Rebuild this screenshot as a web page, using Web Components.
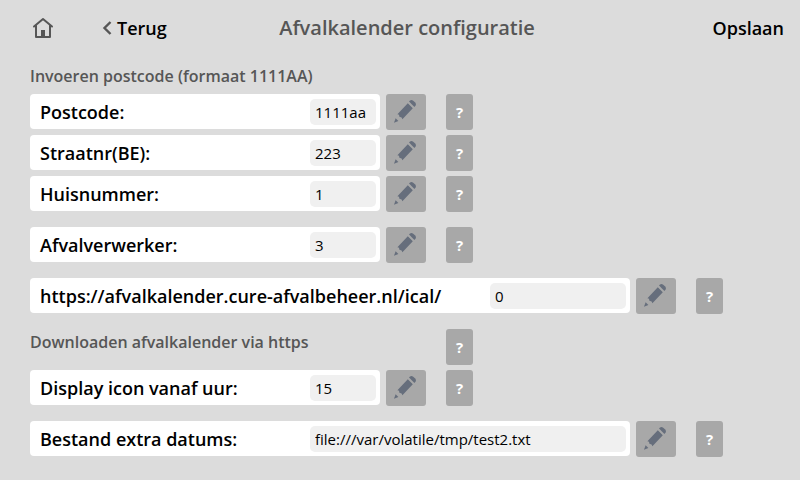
<!DOCTYPE html>
<html lang="nl">
<head>
<meta charset="utf-8">
<meta name="viewport" content="width=device-width, initial-scale=1">
<title>Afvalkalender configuratie</title>
<style>
  body {
    margin: 0;
    background-color: #dcdcdc;
    color: #000;
    font-family: "Open Sans", "Noto Sans", sans-serif;
  }
</style>
</head>
<body>
<config-screen>
  <screen-header slot="header">Afvalkalender configuratie</screen-header>
  <config-group>
    <section-title slot="title">Invoeren postcode (formaat 1111AA)</section-title>
    <config-row label="Postcode:" value="1111aa"></config-row>
    <config-row label="Straatnr(BE):" value="223"></config-row>
    <config-row label="Huisnummer:" value="1"></config-row>
  </config-group>
  <config-row label="Afvalverwerker:" value="3"></config-row>
  <config-row class="wide" label="https://afvalkalender.cure-afvalbeheer.nl/ical/" value="0"></config-row>
  <config-group>
    <section-title slot="title" help>Downloaden afvalkalender via https</section-title>
    <config-row label="Display icon vanaf uur:" value="15"></config-row>
  </config-group>
  <config-row class="wide file" label="Bestand extra datums:" value="file:///var/volatile/tmp/test2.txt"></config-row>
</config-screen>

<script>
/**
 * Base element which renders its template into a shadow root.
 */
class ScreenElement extends HTMLElement {
  constructor() {
    super();

    this.attachShadow({ mode: 'open' });
    const template = document.createElement('template');
    template.innerHTML = this.constructor.markup;
    this.shadowRoot.appendChild(template.content.cloneNode(true));
  }
}

/**
 * Help Button.
 */
class HelpButton extends ScreenElement {
  static markup = `
    <style>
      :host {
        display: block;
        flex: 0 0 27px;
        height: 36px;
      }

      button {
        display: block;
        width: 100%;
        height: 100%;
        margin: 0;
        padding: 0;
        border: none;
        border-radius: 3px;
        background-color: #a8a8a8;
        color: #fff;
        font-family: inherit;
        font-size: 15px;
        font-weight: 700;
        line-height: 36px;
      }
    </style>
    <button type="button">?</button>
  `;
}

/**
 * Edit Button.
 */
class EditButton extends ScreenElement {
  static markup = `
    <style>
      :host {
        display: block;
        flex: 0 0 40px;
        height: 36px;
      }

      button {
        display: block;
        width: 100%;
        height: 100%;
        margin: 0;
        padding: 0;
        border: none;
        border-radius: 3px;
        background-color: #a8a8a8;
      }

      svg {
        display: block;
      }
    </style>
    <button type="button" aria-label="Wijzigen">
      <svg width="40" height="36" viewBox="0 0 40 36" fill="#666e7c">
        <path d="M23 7.600 24 6.600Q25.600 5.400 27.200 6.800L29.200 8.600Q30.600 10.200 29.600 11.600L28.400 13Z"/>
        <path d="M21.800 9.200 26.800 14.200 16.400 25.200 15.600 23.400 13.400 22.800 13 20.800 11.400 20.200Z"/>
        <path d="M9.600 24.200 12.400 27 8 28.800Z"/>
      </svg>
    </button>
  `;
}

/**
 * Config Row.
 *
 * A labelled value with an edit button and a help button.
 */
class ConfigRow extends ScreenElement {
  static markup = `
    <style>
      :host {
        display: flex;
        align-items: flex-start;
        --panel-width: 350px;
        --field-width: 66px;
      }

      :host(.wide) {
        --panel-width: 600px;
        --field-width: 136px;
      }

      :host(.file) {
        --field-width: 316px;
      }

      .panel {
        display: flex;
        flex: 0 1 var(--panel-width);
        justify-content: space-between;
        height: 35px;
        box-sizing: border-box;
        padding: 0 4px 0 10px;
        border-radius: 4px;
        background-color: #fff;
      }

      label {
        font-size: 18px;
        font-weight: 600;
        line-height: 37px;
        white-space: nowrap;
      }

      input {
        width: var(--field-width);
        height: 26px;
        box-sizing: border-box;
        margin: 5px 0 0;
        padding: 0 5px;
        border: none;
        border-radius: 5px;
        background-color: #f0f0f0;
        color: #000;
        font-family: inherit;
        font-size: 15px;
      }

      edit-button {
        margin: 0 20px 0 6px;
      }
    </style>
    <div class="panel">
      <label for="value"></label>
      <input id="value" type="text">
    </div>
    <edit-button></edit-button>
    <help-button></help-button>
  `;

  connectedCallback() {
    this.shadowRoot.querySelector('label').textContent = this.getAttribute('label');
    this.shadowRoot.querySelector('input').value = this.getAttribute('value');
  }
}

/**
 * Section Title.
 *
 * Shows a help button when the help attribute is set.
 */
class SectionTitle extends ScreenElement {
  static markup = `
    <style>
      :host {
        display: flex;
        align-items: flex-start;
      }

      h2 {
        flex: 0 1 416px;
        margin: 0;
        color: #565656;
        font-size: 16px;
        font-weight: 600;
        line-height: 26px;
      }

      help-button {
        display: none;
      }

      :host([help]) help-button {
        display: block;
      }
    </style>
    <h2><slot></slot></h2>
    <help-button></help-button>
  `;
}

/**
 * Config Group.
 */
class ConfigGroup extends ScreenElement {
  static markup = `
    <style>
      :host {
        display: block;
      }

      .rows {
        display: flex;
        flex-direction: column;
        gap: 5px;
      }
    </style>
    <div class="rows">
      <slot name="title"></slot>
      <slot></slot>
    </div>
  `;
}

/**
 * Screen Header.
 */
class ScreenHeader extends ScreenElement {
  static markup = `
    <style>
      :host {
        display: grid;
        grid-template-columns: 1fr auto 1fr;
        align-items: center;
        height: 56px;
        box-sizing: border-box;
        padding: 0 16px 0 30px;
      }

      nav {
        display: flex;
        align-items: center;
        gap: 46px;
      }

      a, button {
        color: #000;
        font-family: inherit;
        font-size: 18px;
        font-weight: 600;
        line-height: 24px;
        text-decoration: none;
      }

      a {
        display: flex;
        align-items: center;
        gap: 4px;
      }

      svg {
        display: block;
        fill: none;
        stroke: #565656;
        stroke-width: 2;
      }

      h1 {
        margin: 0;
        color: #565656;
        font-size: 20px;
        font-weight: 600;
        line-height: 28px;
      }

      button {
        justify-self: end;
        margin: 0;
        padding: 0;
        border: none;
        background: none;
      }
    </style>
    <nav>
      <a href="#home" aria-label="Home">
        <svg width="26" height="26" viewBox="0 0 26 26">
          <path d="M4 11.500 13 4 22 11.500M6 10V22H20V10" stroke-linecap="round" stroke-linejoin="round"/>
          <path d="M11 22V15H15V22Z" fill="#565656" stroke="none"/>
        </svg>
      </a>
      <a href="#terug">
        <svg width="11" height="16" viewBox="0 0 11 16">
          <path d="M8.500 2 2.500 8 8.500 14" stroke-width="2.400"/>
        </svg>
        Terug
      </a>
    </nav>
    <h1><slot></slot></h1>
    <button type="button">Opslaan</button>
  `;
}

/**
 * Config Screen.
 */
class ConfigScreen extends ScreenElement {
  static markup = `
    <style>
      :host {
        display: block;
      }

      main {
        display: flex;
        flex-direction: column;
        gap: 15px;
        padding: 7px 30px 23px;
      }
    </style>
    <slot name="header"></slot>
    <main><slot></slot></main>
  `;
}

// Register custom elements
customElements.define('help-button', HelpButton);
customElements.define('edit-button', EditButton);
customElements.define('config-row', ConfigRow);
customElements.define('section-title', SectionTitle);
customElements.define('config-group', ConfigGroup);
customElements.define('screen-header', ScreenHeader);
customElements.define('config-screen', ConfigScreen);
</script>
</body>
</html>
